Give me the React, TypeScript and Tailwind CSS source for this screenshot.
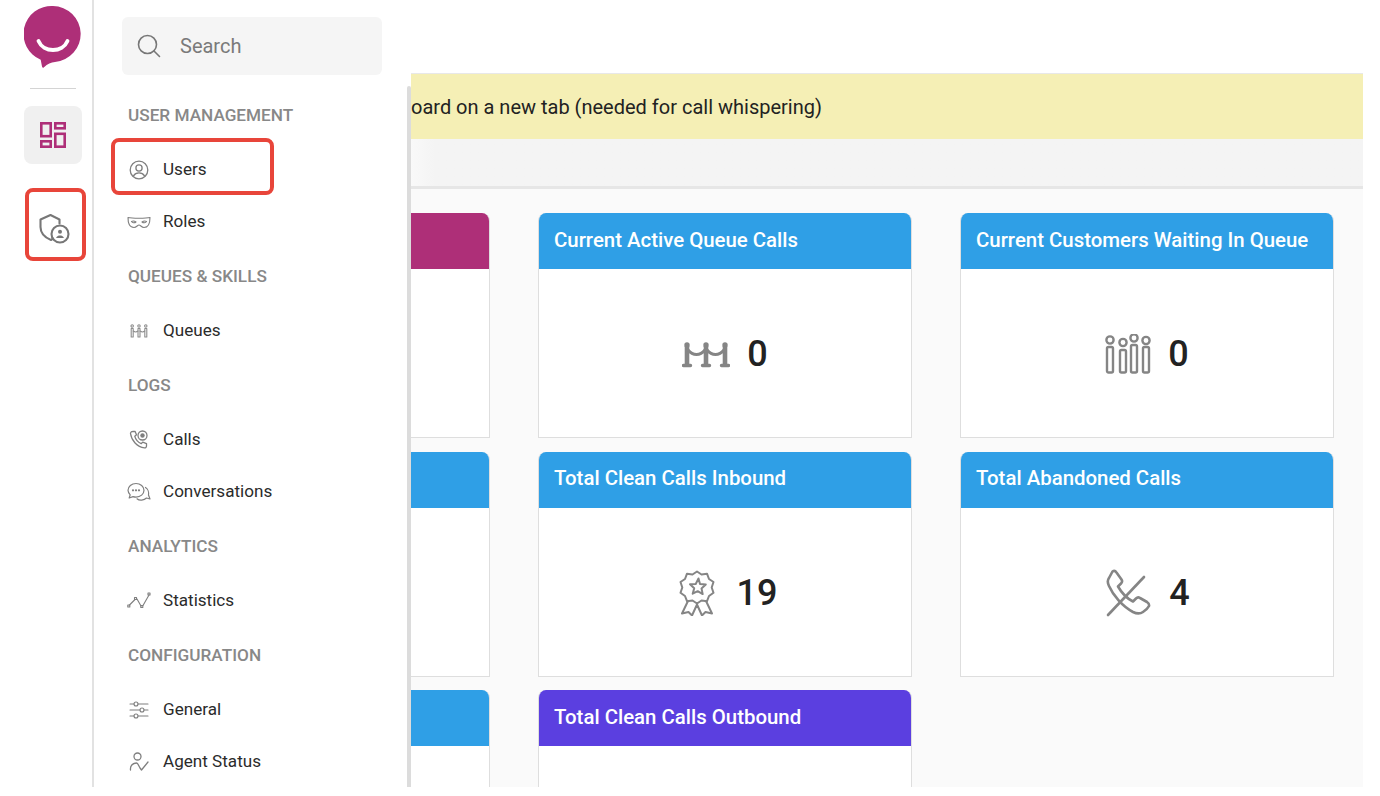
import React from "react";

const g = "#7f7f7f";

function Ico({ children, w = 24, h = 24, vb = "0 0 24 24", sw = 1.4, color = g }: { children: React.ReactNode; w?: number; h?: number; vb?: string; sw?: number; color?: string }) {
  return (
    <svg width={w} height={h} viewBox={vb} fill="none" stroke={color} strokeWidth={sw} strokeLinecap="round" strokeLinejoin="round" className="block shrink-0">
      {children}
    </svg>
  );
}

const Logo = () => (
  <svg width="58" height="64" viewBox="0 0 58 64" className="block">
    <path d="M29 1a28 28 0 0 1 2 55.900c-4 .3-7.500 2-11 5.300-1 .9-1.800.6-2-.6l-1.300-6.800A28 28 0 0 1 29 1z" fill="#ae2f78" />
    <path d="M14.500 36c2.500 6 8.500 9 14.500 9s12-3 14.500-9" fill="none" stroke="#fff" strokeWidth="3.800" strokeLinecap="round" />
  </svg>
);

const Dash = () => (
  <Ico w={28} h={28} vb="0 0 28 28" sw={2.6} color="#ae2f78">
    <g strokeLinecap="butt" strokeLinejoin="miter">
      <rect x="2.300" y="2.300" width="9.400" height="12.900" />
      <rect x="16.300" y="2.300" width="9.400" height="5" />
      <rect x="2.300" y="20.300" width="9.400" height="5.400" />
      <rect x="16.300" y="12.800" width="9.400" height="12.900" />
    </g>
  </Ico>
);

const ShieldUser = () => (
  <Ico w={32} h={32} vb="0 0 32 32" sw={2.1} color="#777">
    <path d="M15 25.500c-.6.5-1.200 1-2 1.500C8 25 2.500 21 2.500 14V6.500L12.500 2 21.500 6.500v4" />
    <circle cx="22" cy="21" r="8.500" />
    <circle cx="22" cy="18.800" r="2" fill="#777" stroke="none" />
    <path d="M18 25c1-2 2.500-2.500 4-2.500s3 .5 4 2.500z" fill="#777" stroke="none" />
  </Ico>
);

const iconUsers = (
  <Ico w={20} h={20} vb="0 0 20 20" sw={1.3}>
    <circle cx="10" cy="10" r="8.800" />
    <circle cx="10" cy="8" r="3.100" />
    <path d="M4.500 15.800c1.200-2 3.200-2.900 5.500-2.900s4.300.9 5.500 2.900" />
  </Ico>
);
const iconRoles = (
  <Ico w={24} h={14} vb="0 0 24 14" sw={1.1}>
    <path d="M1 2.500c3 .8 7 .8 11 .8s8 0 11-.8c0 5-1 10-6 10-2.500 0-3.500-2.500-5-2.500s-2.500 2.500-5 2.500c-5 0-6-5-6-10z" />
    <path d="M4.500 6.500c1.500-.8 3-.6 4.500.5-1.500 1.200-3.500 1-4.500-.5zM19.500 6.500c-1.500-.8-3-.6-4.500.5 1.500 1.200 3.500 1 4.500-.5z" />
  </Ico>
);
const iconQueues = (
  <Ico w={18} h={14} vb="0 0 18 14" sw={1.100} color="#8c8c8c">
    <circle cx="2.200" cy="2" r="1.200" /><circle cx="9" cy="2" r="1.200" /><circle cx="15.800" cy="2" r="1.200" />
    <rect x="1.200" y="4.500" width="2" height="8.500" /><rect x="8" y="4.500" width="2" height="8.500" /><rect x="14.800" y="4.500" width="2" height="8.500" />
    <path d="M3.200 7c2 1.500 3 1.500 4.800 0M10 7c2 1.500 3 1.500 4.800 0" />
  </Ico>
);
const iconCalls = (
  <Ico w={20} h={20} vb="0 0 20 20" sw={1.3}>
    <path d="M3.500 1.500 6 1.300l1.500 3.500-1.700 1.500c.8 3 3 5.700 6.400 7.400l1.500-1.600 3.800 1.500v2.500c0 1-1 2-2 1.800C8 17 2.500 10.500 1.500 3.500c-.1-1 .9-2 2-2z" />
    <circle cx="13.500" cy="5.500" r="4.500" />
    <circle cx="13.500" cy="5.500" r="2.200" fill={g} stroke="none" />
  </Ico>
);
const iconConv = (
  <Ico w={24} h={20} vb="0 0 24 20" sw={1.200}>
    <path d="M9 1.500c4.400 0 8 2.900 8 6.800s-3.600 6.800-8 6.800c-1.100 0-2-.2-3-.5L2.200 16l1-3.200C1.900 11.500 1 10 1 8.300 1 4.400 4.600 1.500 9 1.500z" />
    <path d="M18.500 5.500c2.500 1.500 3.500 5 3 7.500l1.500 4-3.500-1c-2.500 2.500-7 3-9.500.8" />
    <circle cx="6" cy="8.300" r=".5" /><circle cx="9" cy="8.300" r=".5" /><circle cx="12" cy="8.300" r=".5" />
  </Ico>
);
const iconStats = (
  <Ico w={24} h={18} vb="0 0 24 18" sw={1.1}>
    <path d="M2.500 13 8 7.500M10 7l4 7M16 13.500 22 3" />
    <rect x=".8" y="13" width="2" height="2" /><rect x="7.500" y="5.500" width="2" height="2" /><rect x="13.800" y="13.500" width="2" height="2" /><rect x="21" y="1" width="2" height="2" />
  </Ico>
);
const iconGeneral = (
  <Ico w={20} h={18} vb="0 0 20 18" sw={1.1}>
    <path d="M1 3h4M9 3h10M1 9h10M15 9h4M1 15h4M9 15h10" />
    <circle cx="7" cy="3" r="2" /><circle cx="13" cy="9" r="2" /><circle cx="7" cy="15" r="2" />
  </Ico>
);
const iconAgent = (
  <Ico w={20} h={20} vb="0 0 20 20" sw={1.3}>
    <circle cx="8.500" cy="4.500" r="3.500" />
    <path d="M1.500 18c-.5-4 2-7 6-7 1.500 0 2 2.500 3.500 5l1.500 2 6.500-8" />
  </Ico>
);

const Stanchion = () => (
  <Ico w={48} h={28} vb="0 0 48 28" sw={3.2} color="#858585">
    <circle cx="5" cy="5" r="2.700" fill="#858585" stroke="none" /><circle cx="24" cy="5" r="2.700" fill="#858585" stroke="none" /><circle cx="43" cy="5" r="2.700" fill="#858585" stroke="none" />
    <path d="M5 6v19M24 6v19M43 6v19" strokeWidth="4.600" strokeLinecap="butt" />
    <path d="M1.500 25.500h7M20.500 25.500h7M39.500 25.500h7" strokeWidth="3.400" />
    <path d="M6 10c5 6 12 6 17 0M25 10c5 6 12 6 17 0" strokeWidth="3.200" />
  </Ico>
);
const People = () => (
  <Ico w={46} h={40} vb="0 0 46 40" sw={2.400} color="#858585">
    <circle cx="5" cy="6" r="3.600" /><circle cx="18" cy="8.500" r="3.600" /><circle cx="29" cy="4" r="3.600" /><circle cx="41" cy="6.500" r="3.600" />
    <rect x="2" y="13" width="6" height="25.500" rx="1.500" /><rect x="15" y="16" width="6" height="22.500" rx="1.500" /><rect x="26" y="11" width="6" height="27.500" rx="1.500" /><rect x="38" y="13" width="6" height="25.500" rx="1.500" />
  </Ico>
);
const Award = () => (
  <Ico w={36} h={46} vb="0 0 36 46" sw={2} color="#858585">
    <path d="M18 1.500l4.500 3 5.500-.8 2 5.300 4.500 3-1.800 5.500 1.800 5.300-4.500 3.200-2 5.200-5.500-.7-4.500 3-4.500-3-5.500.7-2-5.200-4.500-3.200 1.800-5.300L1.500 12 6 9l2-5.300 5.500.8z" />
    <path d="M19.500 8.500l1.500 5.500 5.800.5-4.300 3.900 1.200 5.700-5-2.900-5 2.500 1.500-5.500-4.200-3.900 5.700-.3z" />
    <path d="M9 31 3 43.500l6.500-1.500 3.500 3.500 5-11 5 11 3.500-3.500 6.500 1.500L27 31" />
  </Ico>
);
const MissedCall = () => (
  <Ico w={48} h={48} vb="0 0 48 48" sw={2.600} color="#858585">
    <path d="M5 9c-1.500 2-1.500 5 0 8 4 9 13 20 24 26 3 1.500 7 2 10 0 3-2 5-4 6-6 .5-2-.5-3-2-4l-7-4c-1.500-1-3-.5-4 .5l-3 3c-6-3-11-8-15-15l3-3c1-1 1.500-2.500.5-4l-5-7c-1-1.500-2.500-2-4-1z" />
    <path d="M4 46 40 8" />
  </Ico>
);

type Nav = { h: string } | { t: string; i: React.ReactNode };
const nav: Nav[] = [
  { h: "USER MANAGEMENT" },
  { t: "Users", i: iconUsers },
  { t: "Roles", i: iconRoles },
  { h: "QUEUES & SKILLS" },
  { t: "Queues", i: iconQueues },
  { h: "LOGS" },
  { t: "Calls", i: iconCalls },
  { t: "Conversations", i: iconConv },
  { h: "ANALYTICS" },
  { t: "Statistics", i: iconStats },
  { h: "CONFIGURATION" },
  { t: "General", i: iconGeneral },
  { t: "Agent Status", i: iconAgent },
];

function Card({ title, color, icon, value, clip }: { title?: string; color: string; icon?: React.ReactNode; value?: string; clip?: boolean }) {
  return (
    <div className={`h-[225px] overflow-hidden border-r border-b border-[#dedede] bg-white ${clip ? "rounded-tr-lg" : "rounded-t-lg border-l"}`}>
      <div className={`flex h-[56px] items-center pb-[2px] pl-[15px] text-[20.4px] font-medium text-white ${color}`}>{title}</div>
      <div className="flex h-[168px] items-center justify-center gap-[17px] pt-[2px]">
        {icon}
        {value && <span className="text-[36px] font-medium leading-none text-[#222]">{value}</span>}
      </div>
    </div>
  );
}

export default function App() {
  return (
    <div className="relative h-[796px] w-[1380px] overflow-hidden bg-white font-['Roboto',sans-serif]">
      <div className="flex h-[787px] w-[1363px] overflow-hidden">
        {/* rail */}
        <div className="flex h-full w-[94px] shrink-0 flex-col items-center border-r-2 border-[#e2e2e2] pl-[14px] pt-[2px]">
          <div className="mt-[3px]"><Logo /></div>
          <div className="mt-[19px] h-px w-[46px] bg-[#d4d4d4]" />
          <div className="mt-[17px] flex h-[58px] w-[58px] items-center justify-center rounded-lg bg-[#f0f0f0]"><Dash /></div>
          <div className="ml-[1px] mt-[49px]"><ShieldUser /></div>
        </div>

        {/* sidebar */}
        <div className="h-full w-[313px] shrink-0 bg-white">
          <div className="ml-[28px] mt-[17px] flex h-[58px] w-[260px] items-center gap-[19px] rounded-md bg-[#f5f5f5] pl-[15px]">
            <Ico w={24} h={24} sw={1.600} color="#777"><circle cx="10.500" cy="10.500" r="9" /><path d="m17 17 5.500 5.500" /></Ico>
            <span className="text-[20px] leading-none text-[#7a7a7a]">Search</span>
          </div>
          <div className="mt-[12px] flex flex-col">
            {nav.map((n, k) =>
              "h" in n ? (
                <div key={k} className="flex h-[57px] items-center pl-[34px] text-[17.2px] font-medium text-[#888]">{n.h}</div>
              ) : (
                <div key={k} className="flex h-[52px] items-center text-[17.1px] text-[#2b2b2b]">
                  <div className="flex w-[69px] shrink-0 justify-center pl-[22px] pr-[1px]">{n.i}</div>
                  <span>{n.t}</span>
                </div>
              )
            )}
          </div>
        </div>

        {/* scroll strip */}
        <div className="h-full w-[4px] shrink-0 pt-[86px]"><div className="h-full rounded-t-sm bg-[#dcdcdc]" /></div>

        {/* main */}
        <div className="min-w-0 flex-1 overflow-hidden">
          <div className="h-[73px] bg-white" />
          <div className="flex h-[66px] items-center whitespace-nowrap border-t border-[#e8e8e8] bg-[#f5efb5] text-[20px] text-[#222]">oard on a new tab (needed for call whispering)</div>
          <div className="h-[47px] bg-linear-to-r from-[#f9f9f9] to-[#f4f4f4] to-[24px]" />
          <div className="h-[3px] bg-[#e6e6e6]" />
          <div className="grid h-[598px] grid-cols-[79px_374px_374px] content-start gap-x-[48px] gap-y-[13.5px] bg-[#fafafa] pt-[24px]">
            <Card clip color="bg-[#ae2f78]" />
            <Card color="bg-[#2f9fe6]" title="Current Active Queue Calls" icon={<Stanchion />} value="0" />
            <Card color="bg-[#2f9fe6]" title="Current Customers Waiting In Queue" icon={<People />} value="0" />
            <Card clip color="bg-[#2f9fe6]" />
            <Card color="bg-[#2f9fe6]" title="Total Clean Calls Inbound" icon={<div className="ml-[6px] mr-[5px]"><Award /></div>} value="19" />
            <Card color="bg-[#2f9fe6]" title="Total Abandoned Calls" icon={<MissedCall />} value="4" />
            <Card clip color="bg-[#2f9fe6]" />
            <Card color="bg-[#5b3fe0]" title="Total Clean Calls Outbound" />
          </div>
        </div>
      </div>

      {/* annotation frames */}
      <div className="absolute left-[25px] top-[188px] h-[73px] w-[61px] rounded-lg border-[4px] border-[#e8453a]" />
      <div className="absolute left-[111px] top-[138px] h-[57px] w-[163px] rounded-lg border-[4px] border-[#e8453a]" />
    </div>
  );
}
